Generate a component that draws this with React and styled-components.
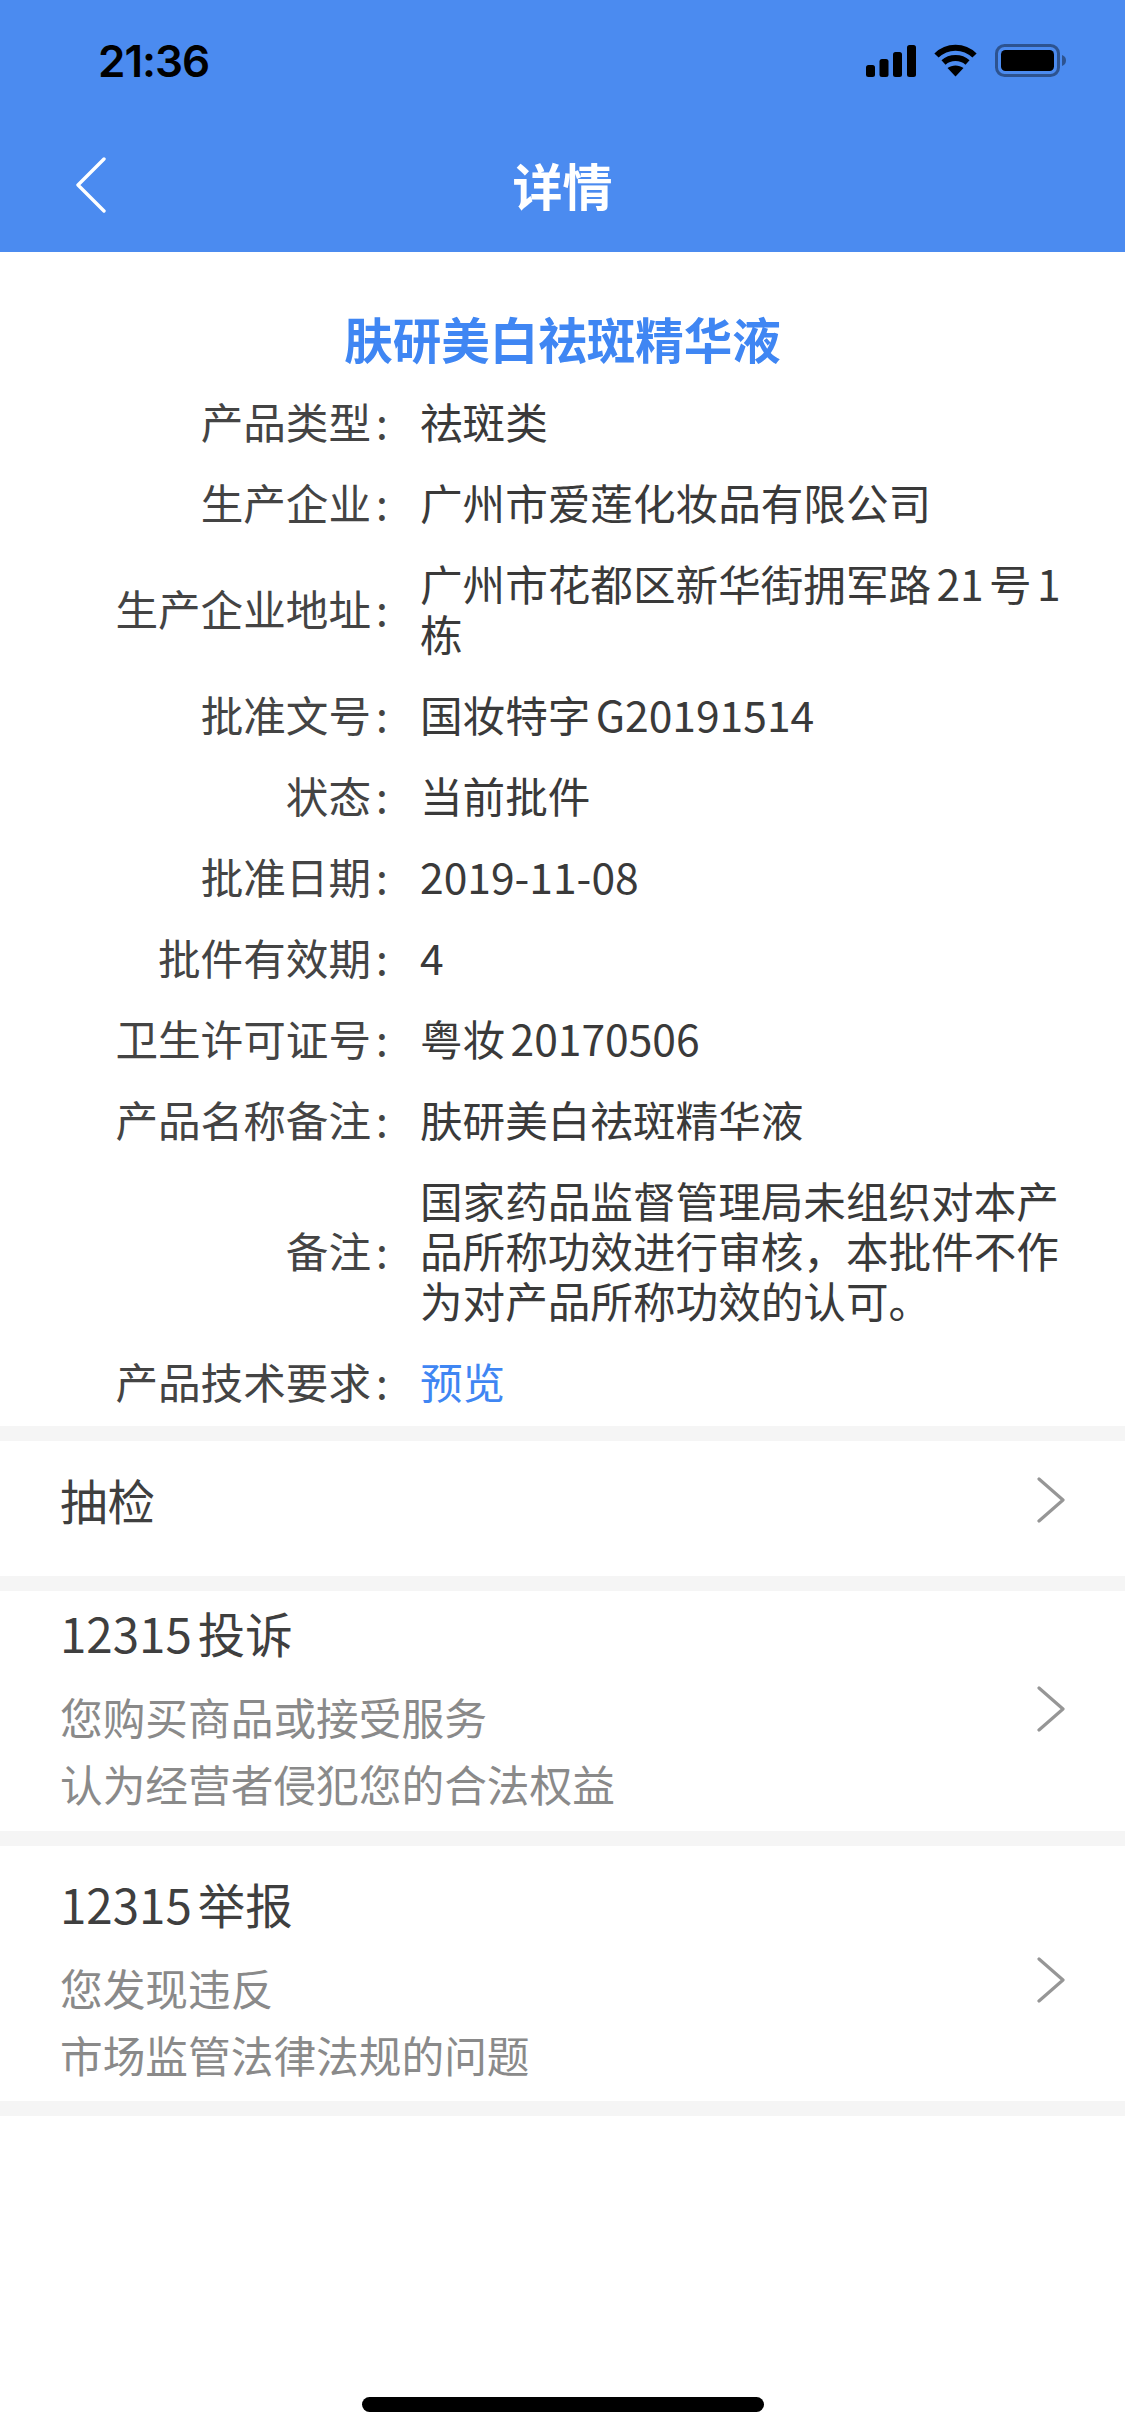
import React from 'react';
import styled, { createGlobalStyle } from 'styled-components';

const GlobalStyle = createGlobalStyle`
  html, body {
    margin: 0;
    padding: 0;
    background: #fff;
  }
  body {
    font-family: "Noto Sans CJK SC", "Inter", sans-serif;
    color: #3a3a3a;
    text-autospace: normal;
  }
`;

const Page = styled.div`
  position: relative;
  width: 1125px;
  height: 2436px;
  overflow: hidden;
  background: #fff;
`;

const Header = styled.header`
  background: #4b8bf0;
  height: 252px;
  display: flex;
  flex-direction: column;
`;

const StatusBar = styled.div`
  height: 118px;
  display: flex;
  align-items: flex-start;
  justify-content: space-between;
  padding: 0 58px 0 98px;
  box-sizing: border-box;
`;

const Clock = styled.span`
  font-family: "Inter", sans-serif;
  font-weight: 600;
  font-size: 44px;
  line-height: 44px;
  margin-top: 39px;
  letter-spacing: -1px;
  color: #000;
`;

const StatusIcons = styled.div`
  display: flex;
  align-items: center;
  gap: 18px;
  margin-top: 44px;
`;

const NavBar = styled.div`
  height: 134px;
  display: grid;
  grid-template-columns: 1fr auto 1fr;
  align-items: center;
  padding: 0 76px;
`;

const NavTitle = styled.h1`
  margin: 0 0 3px;
  font-size: 50px;
  font-weight: 700;
  line-height: 60px;
  color: #fff;
`;

const Detail = styled.section`
  padding-top: 56px;
  height: 1174px;
  box-sizing: border-box;
`;

const ProductName = styled.h2`
  margin: 0 0 11px;
  height: 61px;
  font-size: 48.5px;
  line-height: 61px;
  font-weight: 700;
  text-align: center;
  color: #3f86f3;
`;

const InfoRow = styled.div`
  display: grid;
  grid-template-columns: 393px 1fr;
  column-gap: 27px;
  align-items: center;
  padding: 15.5px 50px 15.5px 0;
`;

const InfoLabel = styled.div`
  display: flex;
  justify-content: flex-end;
  font-size: 42.6px;
  line-height: 50px;
  white-space: nowrap;
  color: #444;
`;

const Colon = styled.span`
  width: 22px;
  text-align: center;
`;

const InfoValue = styled.div`
  font-size: 42.6px;
  line-height: 50px;
  color: ${props => (props.$link ? '#3f86f3' : '#3a3a3a')};
`;

const Gap = styled.div`
  height: 15px;
  background: #f5f5f5;
`;

const ActionRow = styled.div`
  display: flex;
  align-items: center;
  justify-content: space-between;
  padding: ${props => props.$padding};
  padding-left: 60px;
  padding-right: 60px;
`;

const ActionText = styled.div`
  display: flex;
  flex-direction: column;
`;

const ActionTitle = styled.div`
  font-size: 47.5px;
  line-height: 66px;
  color: #3f3f3f;
`;

const ActionHints = styled.div`
  margin-top: 17px;
`;

const ActionHint = styled.div`
  font-size: 42.7px;
  line-height: 67px;
  color: #8a8a8a;
`;

const HomeBar = styled.div`
  position: absolute;
  left: 362px;
  top: 2397px;
  width: 402px;
  height: 15px;
  border-radius: 8px;
  background: #000;
`;

const SignalIcon = () => (
  <svg width="50" height="32" viewBox="0 0 50 32" fill="#000">
    <rect x="0" y="20" width="9" height="12" rx="2.5" />
    <rect x="13.5" y="14" width="9" height="18" rx="2.5" />
    <rect x="27" y="7" width="9" height="25" rx="2.5" />
    <rect x="41" y="0" width="9" height="32" rx="2.5" />
  </svg>
);

const WifiIcon = () => (
  <svg width="43" height="33" viewBox="0 0 43 33" fill="none" stroke="#000" strokeWidth="6">
    <path d="M2.5 11.5 C13 1 30 1 40.5 11.5" />
    <path d="M9.5 18.5 C16 12.5 27 12.5 33.5 18.5" />
    <path d="M13.5 24 L21.5 32.5 L29.5 24 C25 20.5 18 20.5 13.5 24 Z" fill="#000" stroke="none" />
  </svg>
);

const BatteryIcon = () => (
  <svg width="72" height="33" viewBox="0 0 72 33">
    <rect x="1.5" y="1.5" width="62" height="30" rx="8" fill="none" stroke="#000" strokeOpacity="0.4" strokeWidth="3" />
    <rect x="6" y="6" width="53" height="21" rx="4.5" fill="#000" />
    <path d="M67 11 C70 12 71 14 71 16.5 C71 19 70 21 67 22 Z" fill="#000" fillOpacity="0.4" />
  </svg>
);

const BackIcon = () => (
  <svg width="30" height="56" viewBox="0 0 30 56" fill="none" stroke="#fff" strokeWidth="3.4" strokeLinecap="round" strokeLinejoin="round">
    <path d="M28 2 L2 28 L28 54" />
  </svg>
);

const ChevronIcon = () => (
  <svg width="28" height="46" viewBox="0 0 28 46" fill="none" stroke="#969696" strokeWidth="3.2" strokeLinecap="round" strokeLinejoin="round">
    <path d="M2 2 L26 23 L2 44" />
  </svg>
);

const rows = [
  { label: '产品类型', value: '祛斑类' },
  { label: '生产企业', value: '广州市爱莲化妆品有限公司' },
  { label: '生产企业地址', value: '广州市花都区新华街拥军路21号1栋' },
  { label: '批准文号', value: '国妆特字G20191514' },
  { label: '状态', value: '当前批件' },
  { label: '批准日期', value: '2019-11-08' },
  { label: '批件有效期', value: '4' },
  { label: '卫生许可证号', value: '粤妆20170506' },
  { label: '产品名称备注', value: '肤研美白祛斑精华液' },
  { label: '备注', value: '国家药品监督管理局未组织对本产品所称功效进行审核，本批件不作为对产品所称功效的认可。' },
  { label: '产品技术要求', value: '预览', link: true },
];

const actions = [
  { title: '抽检', hints: [], padding: '26px 0 43px' },
  { title: '12315投诉', hints: ['您购买商品或接受服务', '认为经营者侵犯您的合法权益'], padding: '9px 0 14px' },
  { title: '12315举报', hints: ['您发现违反', '市场监管法律法规的问题'], padding: '25px 0 13px' },
];

export default function App() {
  return (
    <Page>
      <GlobalStyle />
      <Header>
        <StatusBar>
          <Clock>21:36</Clock>
          <StatusIcons>
            <SignalIcon />
            <WifiIcon />
            <BatteryIcon />
          </StatusIcons>
        </StatusBar>
        <NavBar>
          <BackIcon />
          <NavTitle>详情</NavTitle>
        </NavBar>
      </Header>
      <Detail>
        <ProductName>肤研美白祛斑精华液</ProductName>
        {rows.map(row => (
          <InfoRow key={row.label}>
            <InfoLabel>{row.label}<Colon>:</Colon></InfoLabel>
            <InfoValue $link={row.link}>{row.value}</InfoValue>
          </InfoRow>
        ))}
      </Detail>
      <Gap />
      {actions.map(action => (
        <React.Fragment key={action.title}>
          <ActionRow $padding={action.padding}>
            <ActionText>
              <ActionTitle>{action.title}</ActionTitle>
              {action.hints.length > 0 && (
                <ActionHints>
                  {action.hints.map(hint => (
                    <ActionHint key={hint}>{hint}</ActionHint>
                  ))}
                </ActionHints>
              )}
            </ActionText>
            <ChevronIcon />
          </ActionRow>
          <Gap />
        </React.Fragment>
      ))}
      <HomeBar />
    </Page>
  );
}
